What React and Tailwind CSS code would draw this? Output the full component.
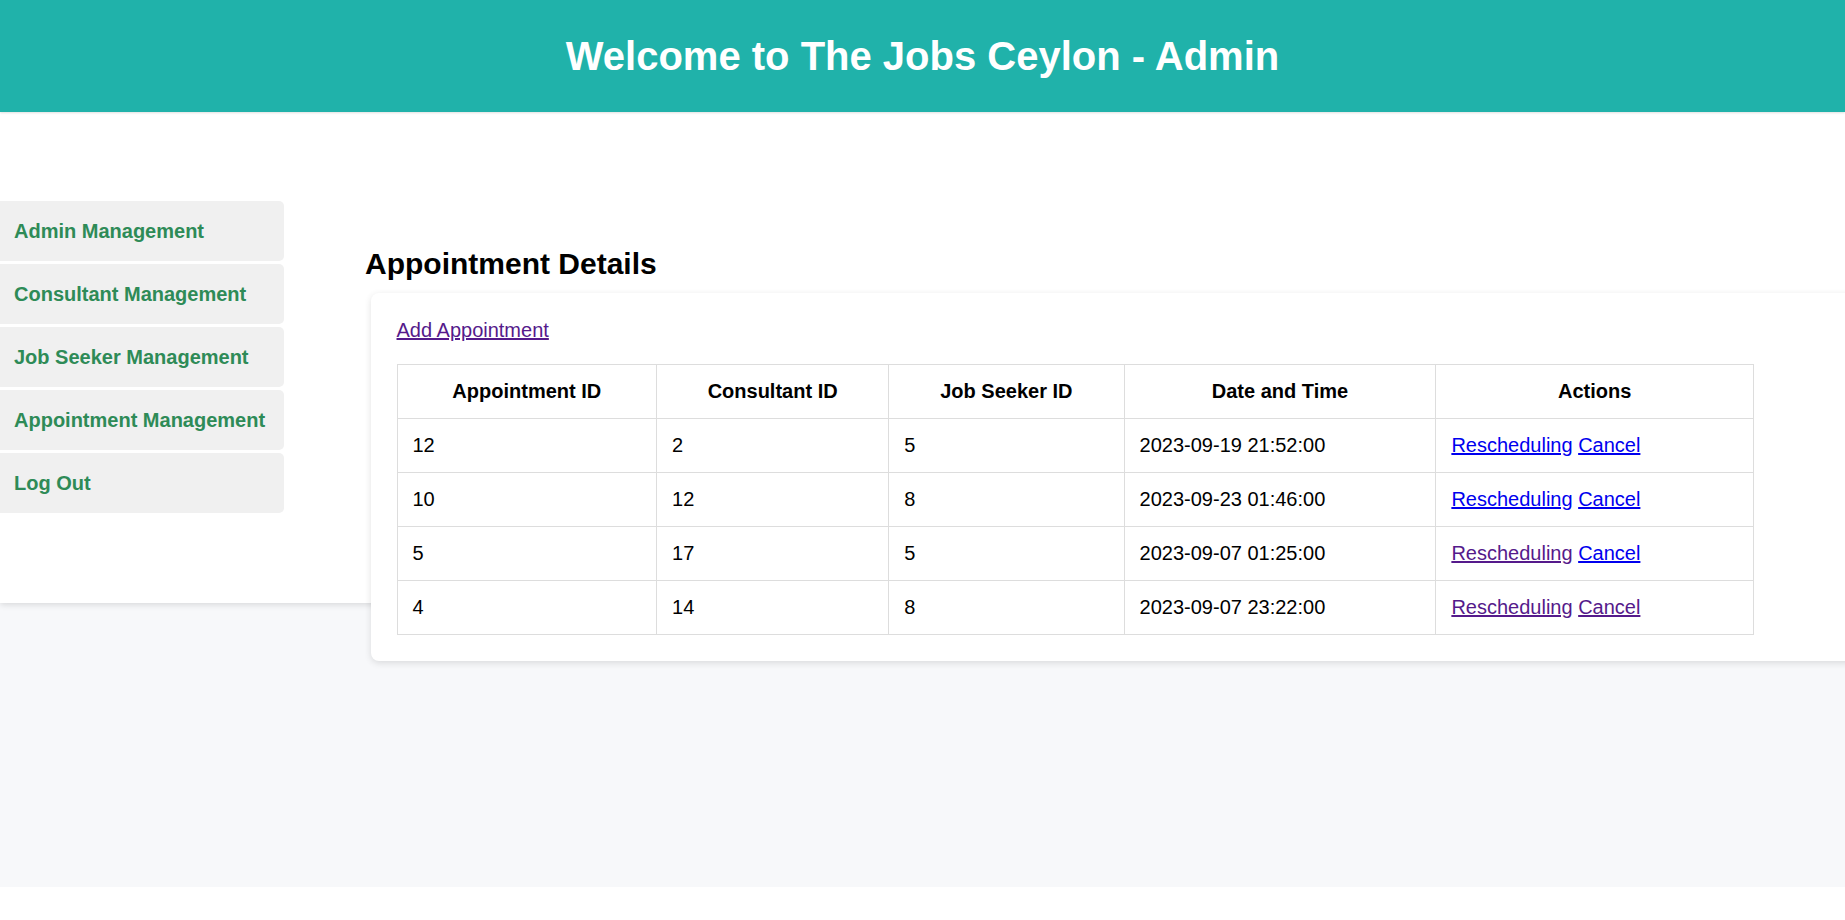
import React from "react";

const menu = [
    "Admin Management",
    "Consultant Management",
    "Job Seeker Management",
    "Appointment Management",
    "Log Out",
];

// visited links show purple, like the browser default
const appointments = [
    { id: 12, consultant: 2, seeker: 5, when: "2023-09-19 21:52:00", resVisited: false, cancelVisited: false },
    { id: 10, consultant: 12, seeker: 8, when: "2023-09-23 01:46:00", resVisited: false, cancelVisited: false },
    { id: 5, consultant: 17, seeker: 5, when: "2023-09-07 01:25:00", resVisited: true, cancelVisited: false },
    { id: 4, consultant: 14, seeker: 8, when: "2023-09-07 23:22:00", resVisited: true, cancelVisited: true },
];

const cell = "border border-[#dddddd] px-[15px] py-[15px] leading-[23px]";

const App = () => {
    return (
        <div className="min-h-screen bg-white font-['Liberation_Sans',Arial,sans-serif] text-black overflow-hidden">
            <div className="h-[887px] bg-[#f7f8fa] overflow-hidden">
                {/* Header */}
                <header className="relative z-10 h-[112px] bg-[#20b2aa] flex items-center justify-center shadow-[0_1px_2px_rgba(0,0,0,0.12)]">
                    <h1 className="text-white text-[40px] font-bold leading-[46px]">
                        Welcome to The Jobs Ceylon - Admin
                    </h1>
                </header>

                {/* Body */}
                <div className="h-[491px] bg-white flex shadow-[0_2px_6px_rgba(0,0,0,0.12)]">
                    <nav className="w-[284px] shrink-0 self-center -mt-[1px] flex flex-col gap-[2.9px]">
                        {menu.map((item) => (
                            <a
                                key={item}
                                href="#"
                                className="h-[60px] flex items-center pl-[14px] bg-[#f0f0f0] rounded-r-[5px] text-[#2e8b57] text-[20px] font-bold"
                            >
                                {item}
                            </a>
                        ))}
                    </nav>

                    <main className="pl-[81px] pt-[134.6px]">
                        <h2 className="text-[30px] font-bold leading-[34.5px]">Appointment Details</h2>
                        <div className="mt-[12.2px] ml-[6px] w-[1520px] bg-white rounded-l-[8px] shadow-[0_2px_7px_rgba(0,0,0,0.12)] p-[25.5px]">
                            <div className="mb-[21.6px] leading-[23px]">
                                <a href="#" className="text-[20px] text-[#551a8b] underline">
                                    Add Appointment
                                </a>
                            </div>
                            <table className="table-fixed w-[1356.6px] border-collapse text-[20px]">
                                <colgroup>
                                    <col className="w-[259.6px]" />
                                    <col className="w-[232.1px]" />
                                    <col className="w-[235.4px]" />
                                    <col className="w-[311.8px]" />
                                    <col className="w-[317.7px]" />
                                </colgroup>
                                <thead>
                                    <tr>
                                        <th className={`${cell} font-bold text-center`}>Appointment ID</th>
                                        <th className={`${cell} font-bold text-center`}>Consultant ID</th>
                                        <th className={`${cell} font-bold text-center`}>Job Seeker ID</th>
                                        <th className={`${cell} font-bold text-center`}>Date and Time</th>
                                        <th className={`${cell} font-bold text-center`}>Actions</th>
                                    </tr>
                                </thead>
                                <tbody>
                                    {appointments.map((a) => (
                                        <tr key={a.id}>
                                            <td className={cell}>{a.id}</td>
                                            <td className={cell}>{a.consultant}</td>
                                            <td className={cell}>{a.seeker}</td>
                                            <td className={cell}>{a.when}</td>
                                            <td className={cell}>
                                                <a
                                                    href="#"
                                                    className={`underline ${a.resVisited ? "text-[#551a8b]" : "text-[#0000ee]"}`}
                                                >
                                                    Rescheduling
                                                </a>{" "}
                                                <a
                                                    href="#"
                                                    className={`underline ${a.cancelVisited ? "text-[#551a8b]" : "text-[#0000ee]"}`}
                                                >
                                                    Cancel
                                                </a>
                                            </td>
                                        </tr>
                                    ))}
                                </tbody>
                            </table>
                        </div>
                    </main>
                </div>
            </div>
        </div>
    );
};

export default App;
